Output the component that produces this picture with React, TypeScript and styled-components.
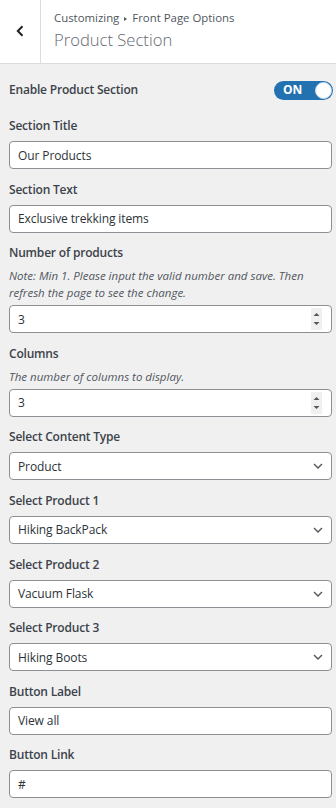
import React from 'react';
import { styled, createGlobalStyle } from 'styled-components';

const GlobalStyle = createGlobalStyle`
  html, body {
    margin: 0;
    padding: 0;
    background: #f0f0f1;
  }
  body {
    font-family: 'Open Sans', 'Noto Sans', sans-serif;
    color: #1d2327;
  }
`;

type Field =
  | { kind: 'text'; label: string; value: string }
  | { kind: 'number'; label: string; value: string; note: string }
  | { kind: 'select'; label: string; value: string };

const fields: Field[] = [
  { kind: 'text', label: 'Section Title', value: 'Our Products' },
  { kind: 'text', label: 'Section Text', value: 'Exclusive trekking items' },
  {
    kind: 'number',
    label: 'Number of products',
    value: '3',
    note: 'Note: Min 1. Please input the valid number and save. Then refresh the page to see the change.',
  },
  { kind: 'number', label: 'Columns', value: '3', note: 'The number of columns to display.' },
  { kind: 'select', label: 'Select Content Type', value: 'Product' },
  { kind: 'select', label: 'Select Product 1', value: 'Hiking BackPack' },
  { kind: 'select', label: 'Select Product 2', value: 'Vacuum Flask' },
  { kind: 'select', label: 'Select Product 3', value: 'Hiking Boots' },
  { kind: 'text', label: 'Button Label', value: 'View all' },
  { kind: 'text', label: 'Button Link', value: '#' },
];

const App = () => {
  return (
    <Panel>
      <GlobalStyle />
      <Header>
        <BackButton>
          <svg width='8' height='12' viewBox='0 0 8 12'>
            <path d='M6.5 1.2 L1.8 6 L6.5 10.8' fill='none' stroke='#1d2327' strokeWidth='2' />
          </svg>
        </BackButton>
        <HeaderText>
          <Crumbs>
            Customizing
            <Sep />
            Front Page Options
          </Crumbs>
          <Title>Product Section</Title>
        </HeaderText>
      </Header>

      <Body>
        <ToggleRow>
          <Label>Enable Product Section</Label>
          <Toggle>
            <ToggleText>ON</ToggleText>
            <Knob />
          </Toggle>
        </ToggleRow>

        {fields.map(field => (
          <Control key={field.label}>
            <Label>{field.label}</Label>
            {field.kind === 'number' && <Note>{field.note}</Note>}
            <InputBox>
              <Value>{field.value}</Value>
              {field.kind === 'number' && (
                <Spinner>
                  <svg width='7' height='16' viewBox='0 0 7 16'>
                    <path d='M0.5 5 L3.5 2 L6.5 5 Z' fill='#50575e' />
                    <path d='M0.5 11 L3.5 14 L6.5 11 Z' fill='#50575e' />
                  </svg>
                </Spinner>
              )}
              {field.kind === 'select' && (
                <Arrow>
                  <svg width='10' height='6' viewBox='0 0 10 6'>
                    <path d='M1 1 L5 5 L9 1' fill='none' stroke='#50575e' strokeWidth='1.4' />
                  </svg>
                </Arrow>
              )}
            </InputBox>
          </Control>
        ))}
      </Body>
    </Panel>
  );
};

const Panel = styled.div`
  width: 336px;
  min-height: 808px;
  background: #f0f0f1;
`;

const Header = styled.div`
  display: flex;
  height: 63px;
  background: #fff;
  border-bottom: 1px solid #dcdcde;
`;

const BackButton = styled.div`
  width: 40px;
  display: flex;
  align-items: center;
  justify-content: center;
  border-right: 1px solid #dcdcde;
  padding-bottom: 1px;
`;

const HeaderText = styled.div`
  display: flex;
  flex-direction: column;
  padding: 9px 0 0 13px;
`;

const Crumbs = styled.div`
  display: flex;
  align-items: center;
  font-size: 11.4px;
  line-height: 18px;
  color: #50575e;
`;

const Sep = styled.span`
  width: 0;
  height: 0;
  border-top: 2.5px solid transparent;
  border-bottom: 2.5px solid transparent;
  border-left: 3.5px solid #50575e;
  margin: 1px 5px 0 5px;
`;

const Title = styled.div`
  font-size: 16.6px;
  line-height: 26px;
  font-weight: 300;
  color: #646970;
`;

const Body = styled.div`
  padding: 14px 3px 0 9px;
`;

const ToggleRow = styled.div`
  display: flex;
  align-items: center;
  justify-content: space-between;
  margin-bottom: 12px;
`;

const Label = styled.div`
  font-size: 12px;
  line-height: 24px;
  font-weight: 600;
  letter-spacing: -0.2px;
  color: #3c434a;
`;

const Toggle = styled.div`
  width: 59px;
  height: 19px;
  border-radius: 10px;
  background: #2271b1;
  display: flex;
  align-items: center;
  justify-content: space-between;
  padding: 0 1px 0 9px;
  box-sizing: border-box;
`;

const ToggleText = styled.span`
  color: #fff;
  font-size: 12px;
  font-weight: 700;
  line-height: 18px;
`;

const Knob = styled.span`
  width: 17px;
  height: 17px;
  box-sizing: border-box;
  border-radius: 50%;
  border: 1px solid #c5d9ea;
  background: #fff;
`;

const Control = styled.div`
  display: flex;
  flex-direction: column;
  margin-bottom: 8.6px;
  margin-right: 1px;
`;

const Note = styled.div`
  font-size: 11.5px;
  line-height: 17px;
  font-style: italic;
  color: #50575e;
  margin: 2px 0 1px;
`;

const InputBox = styled.div`
  height: 28px;
  box-sizing: border-box;
  border: 1px solid #8c8f94;
  border-radius: 4px;
  background: #fff;
  display: flex;
  align-items: center;
  padding: 0 7px 0 8px;
  margin-top: 3px;
`;

const Value = styled.span`
  flex: 1;
  font-size: 12px;
  letter-spacing: -0.1px;
  color: #2c3338;
`;

const Spinner = styled.span`
  width: 11px;
  height: 22px;
  background: #f0f0f0;
  display: flex;
  align-items: center;
  justify-content: center;
  margin-right: 2px;
`;

const Arrow = styled.span`
  display: flex;
  align-items: center;
  margin-right: 1px;
`;

export default App;
